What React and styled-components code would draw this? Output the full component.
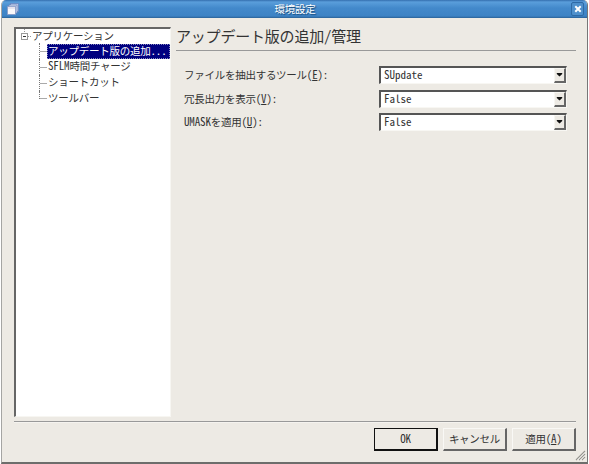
import React from "react";
import styled, { createGlobalStyle } from "styled-components";

const fields = [
  { label: "ファイルを抽出するツール", accessKey: "E", value: "SUpdate" },
  { label: "冗長出力を表示", accessKey: "V", value: "False" },
  { prefix: "UMASK", label: "を適用", accessKey: "U", value: "False" },
];

const pages = [
  { name: "アップデート版の追加", suffix: "...", selected: true },
  { prefix: "SFLM", name: "時間チャージ" },
  { name: "ショートカット" },
  { name: "ツールバー" },
];

function App() {
  return (
    <>
      <GlobalStyle />
      <Window>
        <TitleBar>
          <WindowIcon />
          <Title>環境設定</Title>
          <CloseButton>
            <svg width="8" height="8" viewBox="0 0 8 8">
              <path d="M1.3 1.3l5.4 5.4M6.7 1.3L1.3 6.7" stroke="#fff" strokeWidth="2" />
            </svg>
          </CloseButton>
        </TitleBar>
        <Body>
          <Main>
            <Tree>
              <Root>
                <Expander />
                アプリケーション
              </Root>
              {pages.map((page) => (
                <Branch key={page.name}>
                  <Item $selected={page.selected}>
                    <Latin>{page.prefix}</Latin>
                    {page.name}
                    <Latin>{page.suffix}</Latin>
                  </Item>
                </Branch>
              ))}
            </Tree>
            <Panel>
              <Heading>アップデート版の追加/管理</Heading>
              <Form>
                {fields.map((field) => (
                  <Field key={field.accessKey}>
                    <Label>
                      <Latin>{field.prefix}</Latin>
                      {field.label}
                      <Latin>
                        (<Key>{field.accessKey}</Key>):
                      </Latin>
                    </Label>
                    <Combo>
                      <Value>{field.value}</Value>
                      <Arrow>
                        <svg width="7" height="4" viewBox="0 0 7 4">
                          <path d="M0.8 0h5.4v1L3.5 3.6L0.8 1z" fill="#111" />
                        </svg>
                      </Arrow>
                    </Combo>
                  </Field>
                ))}
              </Form>
            </Panel>
          </Main>
          <Footer>
            <Button $primary>
              <Latin>OK</Latin>
            </Button>
            <Button>キャンセル</Button>
            <Button>
              適用
              <Latin>
                (<Key>A</Key>)
              </Latin>
            </Button>
          </Footer>
        </Body>
        <Grip width="11" height="11" viewBox="0 0 11 11">
          <path d="M1 10L10 1M4 10l6-6M7 10l3-3" stroke="#969590" strokeWidth="1.1" />
          <path d="M2.5 10L10 2.5M5.5 10L10 5.5M8.5 10L10 8.5" stroke="#fff" strokeWidth="0.6" />
        </Grip>
      </Window>
    </>
  );
}

function WindowIcon() {
  return (
    <svg width="12" height="12" viewBox="0 0 12 12">
      <rect x="3.5" y="0.5" width="8" height="8" fill="#c3cfec" stroke="#6787c3" strokeWidth="0.8" />
      <rect x="2" y="2" width="8" height="8" fill="#dcdff1" stroke="#7289bd" strokeWidth="0.8" />
      <rect x="0.5" y="3.5" width="8" height="8" fill="#faf8fa" stroke="#8498c6" strokeWidth="0.8" />
      <path d="M1 5h7" stroke="#d5d0e2" />
    </svg>
  );
}

function Expander() {
  return (
    <ExpanderIcon width="11" height="15" viewBox="0 0 11 15">
      <path d="M3.5 0v4M7 7.5h4" stroke="#999" strokeDasharray="1 1" />
      <rect x="0.5" y="4.5" width="6" height="6" fill="#fff" stroke="#999" />
      <path d="M2 7.5h3" stroke="#333" />
    </ExpanderIcon>
  );
}

const GlobalStyle = createGlobalStyle`
  * {
    box-sizing: border-box;
  }

  body {
    margin: 0;
    background: #fff;
    color: #333;
    font-family: "Noto Sans CJK JP", sans-serif;
    font-size: 10.5px;
    line-height: 16px;
    letter-spacing: -0.25px;
    font-feature-settings: "hwid";
    white-space: nowrap;
  }
`;

const Window = styled.div`
  position: relative;
  display: flex;
  flex-direction: column;
  width: 587px;
  height: 464px;
  margin-left: 1px;
  background: #edeae4;
  border: solid #777;
  border-width: 0 1px 2px;
  border-color: #777 #777 #6d6d6b #a5a5a3;
  border-radius: 5px 5px 0 0;
  overflow: hidden;
`;

const TitleBar = styled.div`
  display: flex;
  align-items: center;
  height: 18px;
  padding: 0 3px 0 5px;
  background: linear-gradient(#346fae, #5a9edb 2px, #4389cb 8px, #3d83c5 16px, #2a6297);
`;

const Title = styled.div`
  flex: 1;
  text-align: center;
  color: #fff;
  text-shadow: 1px 1px 1px #174876;
`;

const CloseButton = styled.button`
  display: flex;
  align-items: center;
  justify-content: center;
  width: 13px;
  height: 14px;
  padding: 0;
  border: 1px solid #2e6aa5;
  border-radius: 2px;
  background: #4e90cc;
`;

const Body = styled.div`
  display: flex;
  flex: 1;
  flex-direction: column;
  padding: 9px 11px 11px 12px;
`;

const Main = styled.div`
  display: flex;
  height: 390px;
`;

const Latin = styled.span`
  font-size: 11px;
  line-height: 0;
  letter-spacing: -0.15px;
`;

const Tree = styled.div`
  width: 157px;
  padding-left: 5px;
  background: #fff;
  border: solid;
  border-width: 2px 1px 1px 2px;
  border-color: #666 #f7f6f2 #f7f6f2 #666;
`;

const Root = styled.div`
  display: flex;
  height: 14px;
  line-height: 13px;
`;

const ExpanderIcon = styled.svg`
  flex: none;
`;

const Branch = styled.div`
  display: flex;
  align-items: center;
  height: 16px;
  margin-left: 18px;
  background: linear-gradient(#aaa, #aaa) 0 50% / 7px 1px no-repeat;
  border-left: 1px dotted #777;

  &:last-child {
    height: 8px;
    background-position: 0 100%;
    margin-bottom: 8px;
  }

  &:last-child > div {
    margin-top: 8px;
  }
`;

const Item = styled.div`
  flex: 1;
  height: 15px;
  margin-left: 7px;
  padding-left: 1px;
  line-height: ${(props) => (props.$selected ? "14px" : "12px")};
  color: ${(props) => (props.$selected ? "#fff" : "#333")};
  background: ${(props) => (props.$selected ? "#000080" : "transparent")};
  outline: ${(props) => (props.$selected ? "1px dotted #8888bd" : "none")};
  outline-offset: -1px;
`;

const Panel = styled.div`
  flex: 1;
  padding-left: 5px;
`;

const Heading = styled.h1`
  height: 24px;
  margin: 0;
  font-size: 15px;
  font-weight: 400;
  line-height: 18px;
  letter-spacing: -0.2px;
  border-bottom: 1px solid #999;
`;

const Form = styled.div`
  display: flex;
  flex-direction: column;
  gap: 5px;
  padding: 15px 9px 0 8px;
`;

const Field = styled.div`
  display: flex;
  align-items: center;
  height: 18.5px;
`;

const Label = styled.label`
  width: 195px;
`;

const Key = styled.span`
  text-decoration: underline;
  text-underline-offset: 1px;
`;

const Combo = styled.div`
  display: flex;
  flex: 1;
  height: 18px;
  background: #fff;
  border: solid;
  border-width: 2px 1px 1px 2px;
  border-color: #555 #f8f7f3 #f8f7f3 #555;
`;

const Value = styled.div`
  flex: 1;
  padding-left: 3px;
  font-size: 11px;
  line-height: 12px;
  letter-spacing: 0;
`;

const Arrow = styled.div`
  display: flex;
  align-items: center;
  justify-content: center;
  width: 12px;
  height: 15px;
  background: #edeae4;
  border: solid;
  border-width: 1px 2px 2px 1px;
  border-color: #f7f6f2 #666 #666 #f7f6f2;
`;

const Footer = styled.div`
  display: flex;
  justify-content: flex-end;
  gap: 5px;
  margin-top: 4px;
  padding-top: 6px;
  border-top: 1px solid #999;
  box-shadow: inset 0 1px #f5f3ef;
`;

const Button = styled.button`
  width: 64px;
  height: 23px;
  padding: 0;
  color: #333;
  font: inherit;
  letter-spacing: inherit;
  font-feature-settings: inherit;
  background: #edeae4;
  border: solid;
  border-width: 1px 2px 2px 1px;
  border-color: ${(props) => (props.$primary ? "#111" : "#f9f8f5 #666 #666 #f9f8f5")};
`;

const Grip = styled.svg`
  position: absolute;
  right: 1px;
  bottom: 1px;
`;

export default App;
